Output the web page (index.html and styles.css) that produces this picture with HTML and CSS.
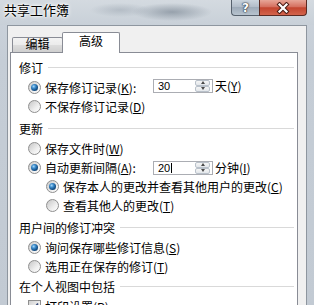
FILE: index.html
```html
<!DOCTYPE html>
<html lang="zh-CN">
<head>
<meta charset="utf-8">
<title>共享工作簿</title>
<link rel="stylesheet" href="styles.css">
</head>
<body>
<div class="window">
  <div class="titlebar">
    <span class="title">共享工作簿</span>
    <div class="caption">
      <div class="cbtn help"><span class="q">?</span></div>
      <div class="cbtn close">
        <svg width="14" height="12" viewBox="0 0 14 12"><path d="M3.5 2.5 L10.5 9.5 M10.5 2.5 L3.5 9.5" stroke="#4a1c14" stroke-width="4.2" stroke-linecap="square" fill="none"/><path d="M3.5 2.5 L10.5 9.5 M10.5 2.5 L3.5 9.5" stroke="#ffffff" stroke-width="2.2" stroke-linecap="square" fill="none"/></svg>
      </div>
    </div>
  </div>
  <div class="frame">
    <div class="client">
      <div class="tabs">
        <div class="tab">编辑</div>
        <div class="tab active">高级</div>
      </div>
      <div class="panel">
        <div class="group">
          <div class="ghead"><span>修订</span><i class="rule"></i></div>
          <div class="row">
            <span class="radio on"></span><span class="fixed">保存修订记录(<u>K</u>):</span>
            <span class="field up"><span class="spin"><span class="val">30</span><span class="arrows"><span class="ab"><i class="tri-up"></i></span><span class="ab"><i class="tri-down"></i></span></span></span><span class="unit">天(<u>Y</u>)</span></span>
          </div>
          <div class="row"><span class="radio"></span><span>不保存修订记录(<u>D</u>)</span></div>
        </div>
        <div class="group gap">
          <div class="ghead"><span>更新</span><i class="rule"></i></div>
          <div class="row"><span class="radio"></span><span>保存文件时(<u>W</u>)</span></div>
          <div class="row">
            <span class="radio on"></span><span class="fixed">自动更新间隔(<u>A</u>):</span>
            <span class="field"><span class="spin"><span class="val">20<i class="caret"></i></span><span class="arrows"><span class="ab"><i class="tri-up"></i></span><span class="ab"><i class="tri-down"></i></span></span></span><span class="unit">分钟(<u>I</u>)</span></span>
          </div>
          <div class="row sub"><span class="radio on"></span><span>保存本人的更改并查看其他用户的更改(<u>C</u>)</span></div>
          <div class="row sub"><span class="radio"></span><span>查看其他人的更改(<u>T</u>)</span></div>
        </div>
        <div class="group gap">
          <div class="ghead"><span>用户间的修订冲突</span><i class="rule"></i></div>
          <div class="row"><span class="radio on"></span><span>询问保存哪些修订信息(<u>S</u>)</span></div>
          <div class="row"><span class="radio"></span><span>选用正在保存的修订(<u>T</u>)</span></div>
        </div>
        <div class="group">
          <div class="ghead"><span>在个人视图中包括</span><i class="rule"></i></div>
          <div class="row">
            <span class="check"><svg width="9" height="9" viewBox="0 0 9 9"><path d="M1 4.5 L3.5 7 L8 1.5" stroke="#3d4f7a" stroke-width="1.8" fill="none"/></svg></span><span>打印设置(<u>P</u>)</span>
          </div>
        </div>
      </div>
    </div>
  </div>
</div>
</body>
</html>
```
FILE: styles.css
```css
body {
  margin: 0;
}

.window {
  width: 314px;
  height: 305px;
  overflow: hidden;
  display: flex;
  flex-direction: column;
  background: linear-gradient(#cdd4dc, #c5cdd6 60px, #c2cad3);
  font-family: "Noto Sans CJK SC", "Noto Sans", sans-serif;
  color: #000;
}

.titlebar {
  height: 25px;
  flex: none;
  display: flex;
  align-items: flex-start;
  background:
    radial-gradient(ellipse 40px 9px at 172px 12px, rgba(105, 118, 132, 0.55), rgba(105, 118, 132, 0)),
    radial-gradient(ellipse 30px 7px at 120px 10px, rgba(130, 142, 155, 0.35), rgba(130, 142, 155, 0)),
    linear-gradient(#d4dae0, #c8d0d8);
}

.title {
  margin: 2px 0 0 4px;
  font-size: 13px;
  line-height: 16px;
  text-shadow: 0 0 5px #fff, 0 0 3px #fff, 0 0 2px #fff;
}

.caption {
  margin-left: auto;
  margin-right: 7px;
  display: flex;
}

.cbtn {
  height: 16px;
  box-sizing: border-box;
  display: flex;
  align-items: center;
  justify-content: center;
}

.help {
  width: 28px;
  border: 1px solid #56616d;
  border-top: 0;
  border-right: 0;
  border-radius: 0 0 0 4px;
  background: linear-gradient(#cbd4dd, #b2bdc9 45%, #9eabb9 50%, #b7c3ce);
}

.q {
  color: #fff;
  font: bold 12px/12px "DejaVu Sans", sans-serif;
  text-shadow: 0 0 1px #27323d, 0 0 1px #27323d, 0 0 2px #27323d;
}

.close {
  width: 48px;
  border: 1px solid #5b2a22;
  border-top: 0;
  border-radius: 0 0 4px 0;
  background: linear-gradient(#e7a698, #d5705f 45%, #c3452f 52%, #d3644c);
}

.frame {
  flex: 1;
  display: flex;
  padding: 0 7px;
  min-height: 0;
}

.client {
  flex: 1;
  display: flex;
  flex-direction: column;
  background: #f0f0f0;
  border: 1px solid #8e969f;
  border-bottom: 0;
  padding: 6px 8px 0 2px;
}

.tabs {
  display: flex;
  align-items: flex-end;
  height: 20px;
  padding-left: 2px;
  flex: none;
}

.tab {
  box-sizing: border-box;
  width: 51px;
  height: 15px;
  border: 1px solid #898c95;
  border-bottom: 0;
  border-radius: 2px 2px 0 0;
  background: linear-gradient(#f3f3f3, #ebebeb 50%, #dddddd 50%, #cfcfcf);
  font-size: 12px;
  line-height: 12px;
  text-align: center;
}

.tab.active {
  width: 58px;
  height: 21px;
  margin-left: -1px;
  margin-bottom: -1px;
  background: #fff;
  line-height: 15px;
  position: relative;
  z-index: 1;
}

.panel {
  flex: 1;
  background: #fff;
  border: 1px solid #898c95;
  padding: 4px 3px 0 8px;
}

.group.gap {
  margin-top: 2px;
}

.ghead {
  display: flex;
  align-items: center;
  height: 21px;
  font-size: 12px;
}

.rule {
  flex: 1;
  height: 1px;
  margin-left: 5px;
  background: #d9d9d9;
}

.row {
  display: flex;
  align-items: center;
  height: 19px;
  font-size: 12px;
  white-space: nowrap;
}

.radio,
.check {
  flex: none;
  width: 13px;
  height: 13px;
  box-sizing: border-box;
  margin-left: 9px;
  margin-right: 4px;
  display: inline-grid;
  place-items: center;
  border: 1px solid #8f8f8f;
  background: linear-gradient(135deg, #c6c6c6, #eeeeee 60%, #ffffff);
}

.radio {
  border-radius: 50%;
}

.row.sub .radio {
  margin-left: 27px;
}

.radio.on::after {
  content: "";
  width: 7px;
  height: 7px;
  border-radius: 50%;
  background: radial-gradient(circle at 38% 35%, #a8d8f8 0, #3d8ccc 30%, #17548c 60%, #0b2f55 100%);
}

.check {
  background: linear-gradient(135deg, #d0d0d0, #f0f0f0 60%, #fff);
}

.fixed {
  width: 108px;
}

.field {
  display: flex;
  align-items: center;
}

.field.up {
  margin-bottom: 4px;
}

.spin {
  box-sizing: border-box;
  width: 60px;
  height: 14px;
  border: 1px solid #abadb3;
  background: #fff;
  display: flex;
  align-items: center;
}

.val {
  flex: 1;
  padding-left: 4px;
  font: 11px/12px "Liberation Sans", sans-serif;
  display: flex;
  align-items: center;
}

.caret {
  width: 1px;
  height: 10px;
  background: #000;
  margin-left: 1px;
}

.arrows {
  width: 15px;
  height: 12px;
  margin-right: 2px;
  display: flex;
  flex-direction: column;
}

.ab {
  flex: 1;
  box-sizing: border-box;
  border: 1px solid #b9c1ca;
  border-radius: 2px;
  background: linear-gradient(#f6f6f6, #e3e7eb);
  display: grid;
  place-items: center;
}

.tri-up,
.tri-down {
  width: 0;
  height: 0;
  border-left: 2.5px solid transparent;
  border-right: 2.5px solid transparent;
}

.tri-up {
  border-bottom: 3px solid #4a4a4a;
}

.tri-down {
  border-top: 3px solid #4a4a4a;
}

.unit {
  margin-left: 2px;
}

u {
  text-decoration-thickness: 1px;
  text-underline-offset: 1px;
}
```
